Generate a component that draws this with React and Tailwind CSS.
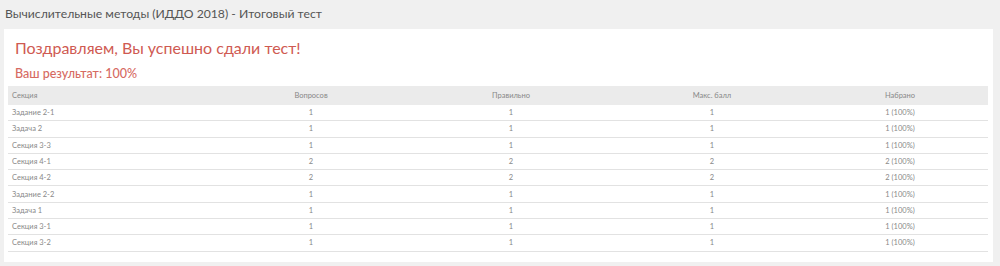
import React from "react";

const rows = [
  ["Задание 2-1", "1", "1", "1", "1 (100%)"],
  ["Задача 2", "1", "1", "1", "1 (100%)"],
  ["Секция 3-3", "1", "1", "1", "1 (100%)"],
  ["Секция 4-1", "2", "2", "2", "2 (100%)"],
  ["Секция 4-2", "2", "2", "2", "2 (100%)"],
  ["Задание 2-2", "1", "1", "1", "1 (100%)"],
  ["Задача 1", "1", "1", "1", "1 (100%)"],
  ["Секция 3-1", "1", "1", "1", "1 (100%)"],
  ["Секция 3-2", "1", "1", "1", "1 (100%)"],
];

const cols = "grid grid-cols-[204px_198px_202px_200px_176px]";

export default function App() {
  return (
    <div
      className="w-[1000px] h-[266px] bg-[#f0f0f0] overflow-hidden"
      style={{ fontFamily: "Lato, 'Open Sans', sans-serif" }}
    >
      <div className="h-[29px] pl-[5px] flex items-center text-[12.2px] text-[#555]">
        Вычислительные методы (ИДДО 2018) - Итоговый тест
      </div>
      <div className="ml-[4px] w-[989px] h-[233px] bg-white pt-[8px]">
        <div className="pl-[11px] h-[22px] flex items-center text-[16px] text-[#cf5a52]">
          Поздравляем, Вы успешно сдали тест!
        </div>
        <div className="pl-[11px] mt-[8px] h-[15px] flex items-center text-[12.5px] font-medium text-[#d66a62]">
          Ваш результат: 100%
        </div>
        <div className="ml-[4px] mt-[4px] w-[980px] text-[7.5px] text-[#888]">
          <div className={`${cols} h-[19px] items-center bg-[#ebebeb]`}>
            <div className="pl-[4px]">Секция</div>
            <div className="text-center">Вопросов</div>
            <div className="text-center">Правильно</div>
            <div className="text-center">Макс. балл</div>
            <div className="text-center">Набрано</div>
          </div>
          {rows.map((r, i) => (
            <div
              key={i}
              className={`${cols} h-[16.3px] items-center border-b border-[#e2e2e2]`}
            >
              <div className="pl-[4px]">{r[0]}</div>
              <div className="text-center">{r[1]}</div>
              <div className="text-center">{r[2]}</div>
              <div className="text-center">{r[3]}</div>
              <div className="text-center">{r[4]}</div>
            </div>
          ))}
        </div>
      </div>
    </div>
  );
}
